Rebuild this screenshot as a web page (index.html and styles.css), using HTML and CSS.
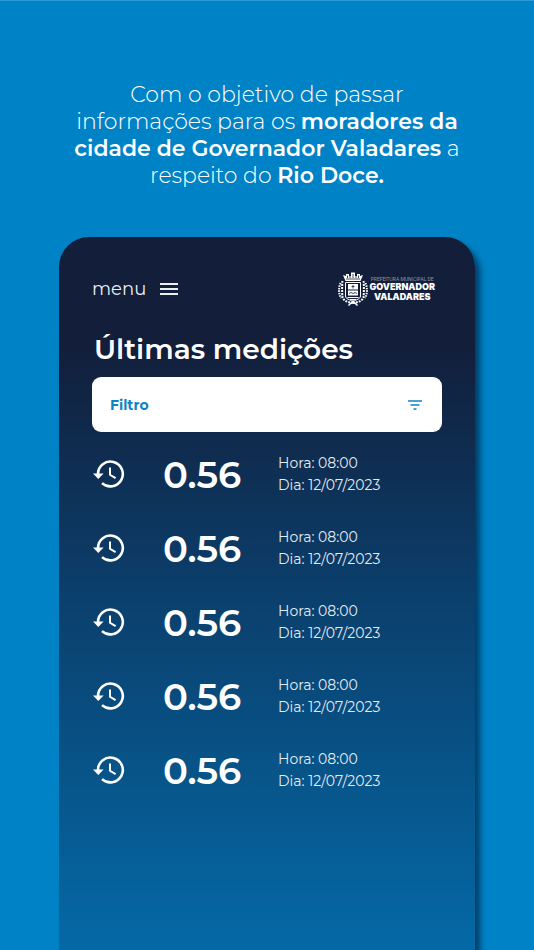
FILE: index.html
```html
<!DOCTYPE html>
<html lang="pt-BR">
<head>
    <meta charset="UTF-8">
    <meta name="viewport" content="width=device-width, initial-scale=1.0">
    <title>Últimas medições</title>
    <link rel="stylesheet" href="styles.css">
</head>
<body>
    <svg class="sprite" aria-hidden="true">
        <symbol id="history" viewBox="0 0 32 28">
            <path d="M5 14a12.4 12.4 0 1 1 4 9.1" fill="none" stroke="currentColor" stroke-width="2.600"/>
            <path d="M0 13.4h10.6L5.3 19z" fill="currentColor"/>
            <path d="M17 7.5v7.3l5.6 3.4" fill="none" stroke="currentColor" stroke-width="2"/>
        </symbol>
    </svg>

    <p class="intro">
        Com o objetivo de passar<br>
        informações para os <strong>moradores da<br>
        cidade de Governador Valadares</strong> a<br>
        respeito do <strong>Rio Doce.</strong>
    </p>

    <main class="phone">
        <header class="topbar">
            <button class="menu" type="button">
                menu
                <svg width="18" height="12" viewBox="0 0 18 12" aria-hidden="true">
                    <path d="M0 1h18M0 6h18M0 11h18" stroke="currentColor" stroke-width="2"/>
                </svg>
            </button>
            <div class="brand">
                <svg class="crest" width="30" height="34" viewBox="0 0 30 34" fill="none" stroke="currentColor" aria-hidden="true">
                    <path d="M5 3l2.500 6h15L25 3l-3 1V2h-3v2h-2V.5h-4V4h-2V2H8v2z" fill="currentColor" stroke="none"/>
                    <path d="M8 7h14M9.500 3.500V6M12 4v2M15 2v4M18 4v2M20.500 3.500V6" stroke="#121e3a" stroke-width=".8"/>
                    <path d="M7.500 10.500h15V24c0 3-4 3.500-7.500 5.500-3.500-2-7.500-2.500-7.500-5.500z" stroke-width="1"/>
                    <path d="M10 12h10v5.500H10zM10 18.500h10v5H10z" fill="currentColor" stroke="none"/>
                    <path d="M15 13v3.500M13.500 14.500h3M11 21.500l2-1 2 1 2-1 2 1" stroke="#121e3a" stroke-width=".8"/>
                    <path d="M9.500 25.500h11M12 27.500h6" stroke-width="1"/>
                    <path d="M4.500 9C4 12 4 22 4.500 25s4 5 10.500 6M25.500 9c.5 3 .5 13 0 16s-4 5-10.500 6" stroke-width="2" stroke-dasharray="2 1"/>
                    <path d="M2.500 11C.5 16 .5 22 3 26M27.500 11c2 5 2 11-.5 15" stroke-width="2" stroke-dasharray="1.500 1"/>
                    <path d="M10.500 33.500L15 29l4.500 4.500" stroke-width="1.500"/>
                </svg>
                <div class="brand-text">
                    <span class="brand-small">PREFEITURA MUNICIPAL DE</span>
                    <span class="brand-name">GOVERNADOR</span>
                    <span class="brand-name">VALADARES</span>
                </div>
            </div>
        </header>

        <h1>Últimas medições</h1>

        <button class="filter" type="button">
            Filtro
            <svg width="14" height="10" viewBox="0 0 14 10" aria-hidden="true">
                <path d="M0 1h14M2.500 5h9M5.500 9h3" stroke="currentColor" stroke-width="1.400"/>
            </svg>
        </button>

        <ul class="readings">
            <li class="reading">
                <svg class="history"><use href="#history"/></svg>
                <span class="value">0.56</span>
                <div class="when"><p>Hora: 08:00</p><p>Dia: 12/07/2023</p></div>
            </li>
            <li class="reading">
                <svg class="history"><use href="#history"/></svg>
                <span class="value">0.56</span>
                <div class="when"><p>Hora: 08:00</p><p>Dia: 12/07/2023</p></div>
            </li>
            <li class="reading">
                <svg class="history"><use href="#history"/></svg>
                <span class="value">0.56</span>
                <div class="when"><p>Hora: 08:00</p><p>Dia: 12/07/2023</p></div>
            </li>
            <li class="reading">
                <svg class="history"><use href="#history"/></svg>
                <span class="value">0.56</span>
                <div class="when"><p>Hora: 08:00</p><p>Dia: 12/07/2023</p></div>
            </li>
            <li class="reading">
                <svg class="history"><use href="#history"/></svg>
                <span class="value">0.56</span>
                <div class="when"><p>Hora: 08:00</p><p>Dia: 12/07/2023</p></div>
            </li>
        </ul>
    </main>
</body>
</html>
```
FILE: styles.css
```css
* {
    box-sizing: border-box;
}
body {
    font-family: Montserrat, Inter, sans-serif;
    background-color: #0083c6;
    color: white;
    margin: 0;
    min-height: 100vh;
    display: flex;
    flex-direction: column;
    border-top: 1px solid #2a9ad6;
}
p, h1, ul {
    margin: 0;
    padding: 0;
}
button {
    font-family: inherit;
    border: none;
    cursor: pointer;
}
.sprite {
    display: none;
}
.intro {
    padding: 80px 20px 48px;
    font-size: 22px;
    font-weight: 300;
    line-height: 27px;
    text-align: center;
}
.intro strong {
    font-weight: 600;
}
.phone {
    flex: 1;
    margin: 0 59px;
    padding: 32px 33px;
    border-radius: 30px 30px 0 0;
    background: linear-gradient(#121e3a 0%, #121e3a 15%, #0b3f6c 50%, #0469a6 100%);
    box-shadow: 5px 6px 6px rgba(0, 30, 60, 0.7);
}
.topbar {
    display: flex;
    justify-content: space-between;
    align-items: center;
    height: 40px;
}
.menu {
    display: flex;
    align-items: center;
    gap: 14px;
    padding: 0;
    background: none;
    color: #e9eef5;
    font-size: 18px;
    font-weight: 400;
}
.brand {
    display: flex;
    align-items: center;
    gap: 1px;
    margin-right: 7px;
}
.brand-text {
    display: flex;
    flex-direction: column;
    align-items: center;
    font-family: Inter, sans-serif;
}
.brand-small {
    color: #8b95a8;
    font-family: Roboto, sans-serif;
    font-size: 5px;
    line-height: 6px;
}
.brand-name {
    font-size: 9px;
    font-weight: 900;
    line-height: 10px;
}
h1 {
    margin: 21px 2px 9px;
    font-size: 28px;
    font-weight: 600;
    line-height: 38px;
}
.filter {
    display: flex;
    justify-content: space-between;
    align-items: center;
    width: 100%;
    height: 55px;
    padding: 0 20px 0 18px;
    border-radius: 9px;
    background-color: white;
    color: #0e83c4;
    font-size: 14px;
    font-weight: 700;
}
.readings {
    margin-top: 5px;
    list-style: none;
}
.reading {
    display: grid;
    grid-template-columns: 70px 115px 1fr;
    align-items: center;
    height: 74px;
    padding-left: 1px;
}
.history {
    width: 32px;
    height: 28px;
}
.value {
    font-size: 37px;
    font-weight: 600;
}
.when {
    color: #e4ecf3;
    font-size: 14px;
    font-weight: 400;
    line-height: 22px;
}
```
